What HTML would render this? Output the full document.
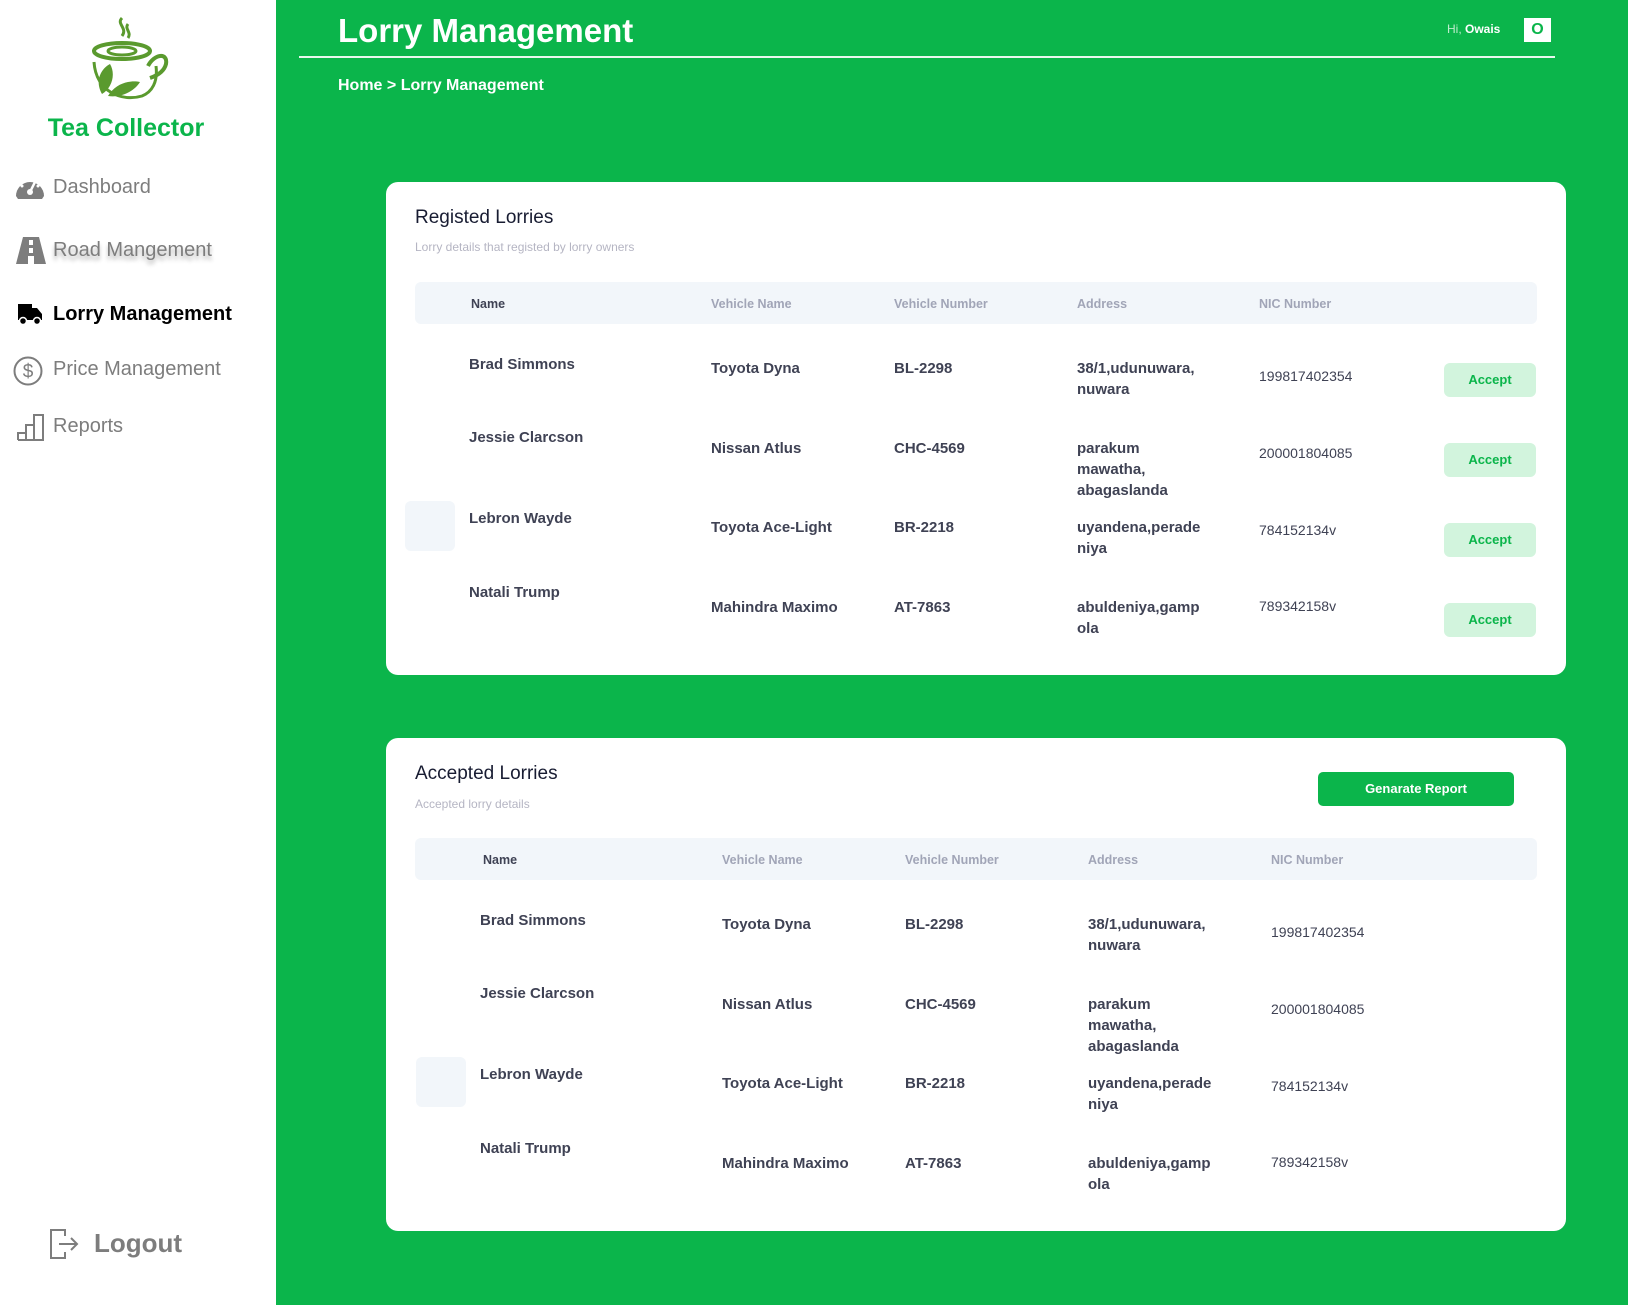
<!DOCTYPE html>
<html><head><meta charset="utf-8"><style>
*{margin:0;padding:0;box-sizing:border-box}
body{width:1628px;height:1305px;background:#0bb54b;font-family:"Liberation Sans",sans-serif;position:relative;overflow:hidden}
.a{position:absolute;white-space:nowrap}
.side{position:absolute;left:0;top:0;width:276px;height:1305px;background:#fff}
.nav{position:absolute;left:53px;font-size:20px;color:#7d7d7d;line-height:24px}
.card{position:absolute;left:386px;width:1180px;background:#fff;border-radius:12px}
.th{position:absolute;left:415px;width:1122px;height:42px;background:#f2f6fa;border-radius:6px}
.h{position:absolute;font-size:12.5px;color:#a1a5b7;line-height:16px;font-weight:bold}
.t{position:absolute;font-size:15px;color:#3f4254;line-height:21px;font-weight:bold;white-space:nowrap}
.n{font-weight:normal;font-size:14px}
.acc{position:absolute;left:1444px;width:92px;height:34px;background:#d2f4dd;border-radius:6px;color:#0bb54b;font-size:13px;font-weight:bold;text-align:center;line-height:34px}
.gb{position:absolute;width:50px;height:50px;background:#f2f6fa;border-radius:6px}
</style></head><body>
<div class="side">
<svg class="a" style="left:86px;top:14px" width="90" height="92" viewBox="0 0 90 92">
<path d="M36 4c-6 6 6 10 0 18 M42 10c-4 5 4 8 0 14" stroke="#5a9a2e" stroke-width="3" fill="none"/>
<ellipse cx="36" cy="37" rx="28" ry="8" fill="none" stroke="#5a9a2e" stroke-width="4"/>
<ellipse cx="36" cy="37" rx="14" ry="4" fill="none" stroke="#5a9a2e" stroke-width="3"/>
<path d="M8 48c2 30 28 40 48 34 10-4 16-14 14-30" stroke="#5a9a2e" stroke-width="3" fill="none"/>
<path d="M62 52c6-12 20-14 18-2-2 8-10 12-16 14" stroke="#5a9a2e" stroke-width="4" fill="none"/>
<path d="M16 80c-8-14 0-26 8-30 6 10 2 24-8 30z M22 82c8-14 24-16 32-14-6 10-20 16-32 14z" fill="#5a9a2e"/>
</svg>
<div class="a" style="left:0;width:252px;text-align:center;top:114px;font-size:25px;font-weight:bold;color:#0bb54b">Tea Collector</div>
<svg class="a" style="left:15px;top:174px" width="30" height="26" viewBox="0 0 30 26"><path d="M1 22A14 14 0 1 1 29 22L27 25H3Z" fill="#7d7d7d"/><path d="M15 18L20 8" stroke="#fff" stroke-width="2.5"/><circle cx="15" cy="18" r="3" fill="#fff"/><circle cx="7" cy="12" r="1.5" fill="#fff"/><circle cx="15" cy="6" r="1.5" fill="#fff"/><circle cx="23" cy="12" r="1.5" fill="#fff"/></svg>
<div class="nav" style="top:175px">Dashboard</div>
<svg class="a" style="left:15px;top:236px" width="32" height="30" viewBox="0 0 32 30"><path d="M8 1H24L31 28H19V20H13V28H1Z" fill="#7d7d7d"/><rect x="14" y="4" width="4" height="5" fill="#fff"/><rect x="14" y="12" width="4" height="5" fill="#fff"/></svg>
<div class="nav" style="top:238px;text-shadow:0 4px 4px rgba(0,0,0,.3)">Road Mangement</div>
<svg class="a" style="left:17px;top:303px" width="26" height="22" viewBox="0 0 26 22"><path d="M1 1H15V5H20L25 11V17H1Z" fill="#000"/><circle cx="6" cy="18" r="3.5" fill="#000" stroke="#fff" stroke-width="1.5"/><circle cx="20" cy="18" r="3.5" fill="#000" stroke="#fff" stroke-width="1.5"/></svg>
<div class="nav" style="top:302px;color:#000;font-weight:bold">Lorry Management</div>
<svg class="a" style="left:13px;top:356px" width="30" height="30" viewBox="0 0 30 30"><circle cx="15" cy="15" r="13.5" fill="none" stroke="#7d7d7d" stroke-width="2"/><text x="15" y="21.5" font-size="19" text-anchor="middle" fill="#7d7d7d" font-family="Liberation Sans">$</text></svg>
<div class="nav" style="top:357px">Price Management</div>
<svg class="a" style="left:17px;top:413px" width="28" height="28" viewBox="0 0 28 28"><path d="M1 27V20H9V27M9 27V12H17V27M17 27V2H26V27Z M1 27H26" fill="none" stroke="#7d7d7d" stroke-width="2"/></svg>
<div class="nav" style="top:414px">Reports</div>
<svg class="a" style="left:49px;top:1228px" width="30" height="32" viewBox="0 0 30 32"><path d="M16 8V2H2V30H16V24" fill="none" stroke="#7d7d7d" stroke-width="2"/><path d="M10 16H28M22 10L28 16L22 22" fill="none" stroke="#7d7d7d" stroke-width="2"/></svg>
<div class="a" style="left:94px;top:1228px;font-size:26px;font-weight:bold;color:#7d7d7d">Logout</div>
</div>

<div class="a" style="left:338px;top:12px;font-size:33px;font-weight:bold;color:#fff">Lorry Management</div>
<div class="a" style="left:299px;top:56px;width:1256px;height:2px;background:#e8f8ee"></div>
<div class="a" style="left:1447px;top:22px;font-size:12px;color:#bfeccd">Hi, <b style="color:#fff">Owais</b></div>
<div class="a" style="left:1524px;top:18px;width:27px;height:24px;background:#fff;color:#0bb54b;font-weight:bold;font-size:16px;text-align:center;line-height:24px">O</div>
<div class="a" style="left:338px;top:77px;font-size:16px;font-weight:bold;color:#fff">Home &gt; Lorry Management</div>

<div class="card" style="top:182px;height:493px"></div>
<div class="a" style="left:415px;top:207px;font-size:19px;color:#181c32">Registed Lorries</div>
<div class="a" style="left:415px;top:240px;font-size:12px;color:#b5b5c3">Lorry details that registed by lorry owners</div>
<div class="th" style="top:282px"></div>
<div class="h" style="left:471px;top:296px;color:#3f4254">Name</div>
<div class="h" style="left:711px;top:296px">Vehicle Name</div>
<div class="h" style="left:894px;top:296px">Vehicle Number</div>
<div class="h" style="left:1077px;top:296px">Address</div>
<div class="h" style="left:1259px;top:296px">NIC Number</div>
<div class="gb" style="left:405px;top:501px"></div>

<div class="t" style="left:469px;top:354px">Brad Simmons</div>
<div class="t" style="left:711px;top:358px">Toyota Dyna</div>
<div class="t" style="left:894px;top:358px">BL-2298</div>
<div class="t" style="left:1077px;top:358px">38/1,udunuwara,<br>nuwara</div>
<div class="t n" style="left:1259px;top:366px">199817402354</div>
<div class="acc" style="top:363px">Accept</div>

<div class="t" style="left:469px;top:427px">Jessie Clarcson</div>
<div class="t" style="left:711px;top:438px">Nissan Atlus</div>
<div class="t" style="left:894px;top:438px">CHC-4569</div>
<div class="t" style="left:1077px;top:438px">parakum<br>mawatha,<br>abagaslanda</div>
<div class="t n" style="left:1259px;top:443px">200001804085</div>
<div class="acc" style="top:443px">Accept</div>

<div class="t" style="left:469px;top:508px">Lebron Wayde</div>
<div class="t" style="left:711px;top:517px">Toyota Ace-Light</div>
<div class="t" style="left:894px;top:517px">BR-2218</div>
<div class="t" style="left:1077px;top:517px">uyandena,perade<br>niya</div>
<div class="t n" style="left:1259px;top:520px">784152134v</div>
<div class="acc" style="top:523px">Accept</div>

<div class="t" style="left:469px;top:582px">Natali Trump</div>
<div class="t" style="left:711px;top:597px">Mahindra Maximo</div>
<div class="t" style="left:894px;top:597px">AT-7863</div>
<div class="t" style="left:1077px;top:597px">abuldeniya,gamp<br>ola</div>
<div class="t n" style="left:1259px;top:596px">789342158v</div>
<div class="acc" style="top:603px">Accept</div>

<div class="card" style="top:738px;height:493px"></div>
<div class="a" style="left:415px;top:763px;font-size:19px;color:#181c32">Accepted Lorries</div>
<div class="a" style="left:415px;top:797px;font-size:12px;color:#b5b5c3">Accepted lorry details</div>
<div class="a" style="left:1318px;top:772px;width:196px;height:34px;background:#0bb54b;border-radius:5px;color:#fff;font-size:13px;font-weight:bold;text-align:center;line-height:34px">Genarate Report</div>
<div class="th" style="top:838px"></div>
<div class="h" style="left:483px;top:852px;color:#3f4254">Name</div>
<div class="h" style="left:722px;top:852px">Vehicle Name</div>
<div class="h" style="left:905px;top:852px">Vehicle Number</div>
<div class="h" style="left:1088px;top:852px">Address</div>
<div class="h" style="left:1271px;top:852px">NIC Number</div>
<div class="gb" style="left:416px;top:1057px"></div>

<div class="t" style="left:480px;top:910px">Brad Simmons</div>
<div class="t" style="left:722px;top:914px">Toyota Dyna</div>
<div class="t" style="left:905px;top:914px">BL-2298</div>
<div class="t" style="left:1088px;top:914px">38/1,udunuwara,<br>nuwara</div>
<div class="t n" style="left:1271px;top:922px">199817402354</div>

<div class="t" style="left:480px;top:983px">Jessie Clarcson</div>
<div class="t" style="left:722px;top:994px">Nissan Atlus</div>
<div class="t" style="left:905px;top:994px">CHC-4569</div>
<div class="t" style="left:1088px;top:994px">parakum<br>mawatha,<br>abagaslanda</div>
<div class="t n" style="left:1271px;top:999px">200001804085</div>

<div class="t" style="left:480px;top:1064px">Lebron Wayde</div>
<div class="t" style="left:722px;top:1073px">Toyota Ace-Light</div>
<div class="t" style="left:905px;top:1073px">BR-2218</div>
<div class="t" style="left:1088px;top:1073px">uyandena,perade<br>niya</div>
<div class="t n" style="left:1271px;top:1076px">784152134v</div>

<div class="t" style="left:480px;top:1138px">Natali Trump</div>
<div class="t" style="left:722px;top:1153px">Mahindra Maximo</div>
<div class="t" style="left:905px;top:1153px">AT-7863</div>
<div class="t" style="left:1088px;top:1153px">abuldeniya,gamp<br>ola</div>
<div class="t n" style="left:1271px;top:1152px">789342158v</div>
</body></html>
